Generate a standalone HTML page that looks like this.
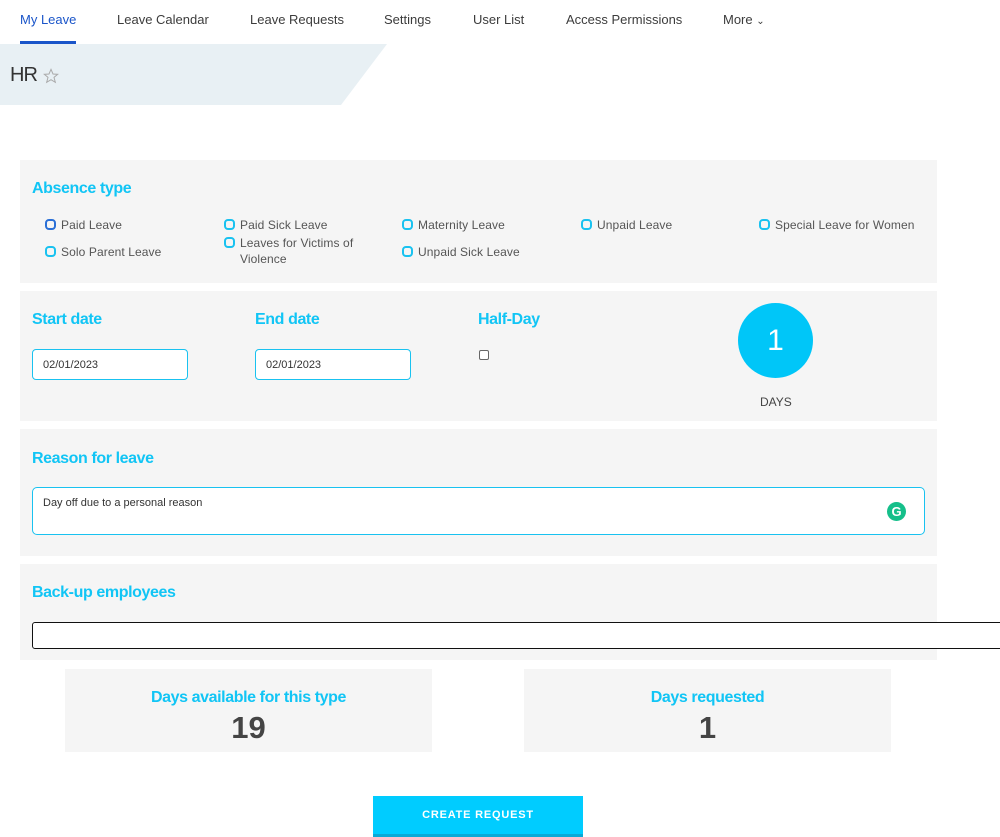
<!DOCTYPE html>
<html><head><style>
*{box-sizing:border-box;margin:0;padding:0}
body{width:1000px;height:837px;overflow:hidden;background:#fff;font-family:"Liberation Sans",sans-serif;position:relative}
.a{position:absolute}
.nav{font-size:13px;color:#3c3c3c;top:12px}
.panel{position:absolute;left:20px;width:917px;background:#f5f5f5}
.h{position:absolute;color:#11c5f5;font-weight:bold;font-size:16px;letter-spacing:-0.4px}
.rb{position:absolute;font-size:12px;color:#555;line-height:16px;letter-spacing:0.1px}
.rb i{position:absolute;left:-16px;top:2px;width:11px;height:11px;border:2px solid #19c2f0;border-radius:4px}
.inp{position:absolute;background:#fff;border:1px solid #19c2f0;border-radius:4px;font-size:11px;color:#333;padding-left:10px}
</style></head><body>
<div class="a nav" style="left:20px;color:#1a55c9">My Leave</div>
<div class="a" style="left:20px;top:41px;width:56px;height:3px;background:#1a55c9"></div>
<div class="a nav" style="left:117px">Leave Calendar</div>
<div class="a nav" style="left:250px">Leave Requests</div>
<div class="a nav" style="left:384px">Settings</div>
<div class="a nav" style="left:473px">User List</div>
<div class="a nav" style="left:566px">Access Permissions</div>
<div class="a nav" style="left:723px">More <span style="font-size:10px">&#8964;</span></div>
<svg class="a" style="left:0;top:44px" width="390" height="62"><polygon points="0,0 387,0 341,61 0,61" fill="#e8f0f4"/></svg>
<div class="a" style="left:10px;top:64px;font-size:20px;color:#333;letter-spacing:-1px">HR</div>
<svg class="a" style="left:43px;top:68px" width="16" height="16" viewBox="0 0 24 24"><polygon points="12,2 15,9 22,9.5 16.5,14 18.5,21.5 12,17.5 5.5,21.5 7.5,14 2,9.5 9,9" fill="none" stroke="#aaa" stroke-width="1.5"/></svg>

<div class="panel" style="top:160px;height:123px"></div>
<div class="h" style="left:32px;top:180px">Absence type</div>
<div class="rb" style="left:61px;top:217px"><i style="border-color:#2a6fd6"></i>Paid Leave</div>
<div class="rb" style="left:240px;top:217px"><i></i>Paid Sick Leave</div>
<div class="rb" style="left:418px;top:217px"><i></i>Maternity Leave</div>
<div class="rb" style="left:597px;top:217px"><i></i>Unpaid Leave</div>
<div class="rb" style="left:775px;top:217px"><i></i>Special Leave for Women</div>
<div class="rb" style="left:61px;top:244px"><i></i>Solo Parent Leave</div>
<div class="rb" style="left:240px;top:235px;width:130px"><i></i>Leaves for Victims of Violence</div>
<div class="rb" style="left:418px;top:244px"><i></i>Unpaid Sick Leave</div>

<div class="panel" style="top:291px;height:130px"></div>
<div class="h" style="left:32px;top:311px">Start date</div>
<div class="h" style="left:255px;top:311px">End date</div>
<div class="h" style="left:478px;top:311px">Half-Day</div>
<div class="inp" style="left:32px;top:349px;width:156px;height:31px;line-height:30px">02/01/2023</div>
<div class="inp" style="left:255px;top:349px;width:156px;height:31px;line-height:30px">02/01/2023</div>
<div class="a" style="left:479px;top:350px;width:10px;height:10px;border:1px solid #666;border-radius:2px;background:#fff"></div>
<div class="a" style="left:738px;top:303px;width:75px;height:75px;border-radius:50%;background:#00c6f8;color:#fff;font-size:30px;text-align:center;line-height:75px">1</div>
<div class="a" style="left:760px;top:395px;font-size:12px;color:#444">DAYS</div>

<div class="panel" style="top:429px;height:127px"></div>
<div class="h" style="left:32px;top:450px">Reason for leave</div>
<div class="inp" style="left:32px;top:487px;width:893px;height:48px;padding-top:9px;border-radius:5px">Day off due to a personal reason</div>
<div class="a" style="left:887px;top:502px;width:19px;height:19px;border-radius:50%;background:#15bf8a;color:#fff;font-size:13px;font-weight:bold;text-align:center;line-height:19px">G</div>

<div class="panel" style="top:564px;height:96px"></div>
<div class="h" style="left:32px;top:584px">Back-up employees</div>
<div class="a" style="left:32px;top:622px;width:980px;height:27px;border:1px solid #111;border-radius:3px;background:#fff"></div>

<div class="a" style="left:65px;top:669px;width:367px;height:83px;background:#f5f5f5;text-align:center">
<div style="color:#11c5f5;font-weight:bold;font-size:16px;margin-top:20px;letter-spacing:-0.4px">Days available for this type</div>
<div style="color:#444;font-weight:bold;font-size:31px;margin-top:3px">19</div></div>
<div class="a" style="left:524px;top:669px;width:367px;height:83px;background:#f5f5f5;text-align:center">
<div style="color:#11c5f5;font-weight:bold;font-size:16px;margin-top:20px;letter-spacing:-0.4px">Days requested</div>
<div style="color:#444;font-weight:bold;font-size:31px;margin-top:3px">1</div></div>

<div class="a" style="left:373px;top:796px;width:210px;height:41px;background:#00ccff;border-bottom:3px solid #0aa9d6;color:#fff;font-weight:bold;font-size:11px;letter-spacing:0.8px;text-align:center;line-height:38px">CREATE REQUEST</div>
</body></html>
